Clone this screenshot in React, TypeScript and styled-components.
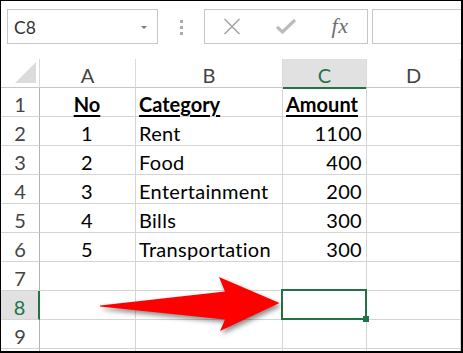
import React from 'react'
import styled, { createGlobalStyle, css } from 'styled-components'

const GlobalStyle = createGlobalStyle`
  html, body {
    margin: 0;
    padding: 0;
    background: #fff;
    overflow: hidden;
  }
`

const GREEN = '#217346'
const GRID_LINE = '#d4d4d4'
const FONT = `Lato, 'Liberation Sans', sans-serif`

const Frame = styled.div`
  position: relative;
  width: 463px;
  height: 353px;
  box-sizing: border-box;
  border: solid #000;
  border-width: 1px 2px 2px 1px;
  background: #fff;
  display: flex;
  flex-direction: column;
  overflow: hidden;
  font-family: ${FONT};
`

const Toolbar = styled.div`
  display: flex;
  align-items: flex-start;
  height: 58px;
  padding: 8px 0 0 6px;
  box-sizing: border-box;
`

const NameBox = styled.div`
  width: 151px;
  height: 35px;
  box-sizing: border-box;
  border: 1px solid #c6c6c6;
  display: flex;
  align-items: center;
  justify-content: space-between;
  padding: 1px 10px 0 6px;
  font-size: 17.5px;
  color: #333;
`

const DropArrow = styled.span`
  width: 0;
  height: 0;
  border-left: 3px solid transparent;
  border-right: 3px solid transparent;
  border-top: 3px solid #7a7a7a;
`

const Grip = styled.div`
  width: 46px;
  height: 35px;
  display: flex;
  flex-direction: column;
  align-items: center;
  justify-content: center;
  gap: 3px;
  padding: 1px 0 0 0;
  box-sizing: border-box;
`

const GripDot = styled.span`
  width: 3px;
  height: 3px;
  background: #ababab;
`

const FormulaButtons = styled.div`
  width: 164px;
  height: 35px;
  box-sizing: border-box;
  border: 1px solid #c6c6c6;
  display: flex;
`

const ButtonSlot = styled.div`
  width: 54px;
  display: flex;
  align-items: center;
  justify-content: center;
`

const FxLabel = styled.span`
  font-family: 'Liberation Serif', serif;
  font-style: italic;
  font-size: 22px;
  color: #6e6e6e;
  letter-spacing: 0.5px;
  margin-top: -2px;
`

const FormulaInput = styled.div`
  flex: 1;
  height: 35px;
  margin-left: 4px;
  box-sizing: border-box;
  border: 1px solid #c6c6c6;
  border-right: none;
`

const Sheet = styled.div`
  flex: 1;
  display: grid;
  grid-template-columns: 39px 96px 147px 84px 1fr;
  grid-auto-rows: 29px;
  overflow: hidden;
`

const headerText = css`
  font-size: 20px;
  color: #444;
  display: flex;
  align-items: center;
  justify-content: center;
  padding-top: 3px;
  box-sizing: border-box;
`

const Corner = styled.div`
  position: relative;
  border-right: 1px solid #dadada;
  border-bottom: 1px solid #c6c6c6;
  &::after {
    content: '';
    position: absolute;
    right: 3px;
    bottom: 4px;
    width: 0;
    height: 0;
    border-left: 21px solid transparent;
    border-bottom: 21px solid #dcdcdc;
  }
`

const ColHeader = styled.div<{ $active?: boolean }>`
  ${headerText}
  border-right: 1px solid #dadada;
  border-bottom: 1px solid #c6c6c6;
  ${p => p.$active && css`
    background: #e1e1e1;
    color: ${GREEN};
    border-bottom: 2px solid ${GREEN};
    margin-bottom: -1px;
    position: relative;
  `}
`

const RowHeader = styled.div<{ $active?: boolean }>`
  ${headerText}
  border-right: 1px solid #b4b4b4;
  border-bottom: 1px solid ${GRID_LINE};
  ${p => p.$active && css`
    background: #e1e1e1;
    color: ${GREEN};
    border-right: 2px solid ${GREEN};
  `}
`

const Cell = styled.div<{ $align?: 'left' | 'center' | 'right'; $bold?: boolean; $selected?: boolean }>`
  position: relative;
  border-right: 1px solid ${GRID_LINE};
  border-bottom: 1px solid ${GRID_LINE};
  box-sizing: border-box;
  display: flex;
  align-items: center;
  padding: 3px 4px 0 3px;
  font-size: 20px;
  letter-spacing: 0.3px;
  color: #000;
  white-space: nowrap;
  justify-content: ${p => p.$align === 'right' ? 'flex-end' : p.$align === 'center' ? 'center' : 'flex-start'};
  ${p => p.$bold && css`
    font-weight: 700;
    letter-spacing: 0;
    text-decoration: underline;
    text-decoration-thickness: 1.5px;
    text-underline-offset: 3px;
  `}
  ${p => p.$selected && css`
    &::after {
      content: '';
      position: absolute;
      top: -2px;
      left: -2px;
      right: -1px;
      bottom: -1px;
      border: 2px solid ${GREEN};
      z-index: 2;
    }
    &::before {
      content: '';
      position: absolute;
      right: -3px;
      bottom: -3px;
      width: 6px;
      height: 6px;
      background: ${GREEN};
      z-index: 3;
    }
  `}
`

const ArrowLayer = styled.svg`
  position: absolute;
  left: 89px;
  top: 269px;
  width: 200px;
  height: 70px;
  overflow: visible;
  filter: drop-shadow(2px 3px 2.5px rgba(0, 0, 0, 0.45));
  z-index: 5;
`

type Align = 'left' | 'center' | 'right'
type CellData = { text?: string; align?: Align; bold?: boolean }

const rows: CellData[][] = [
  [{ text: 'No', align: 'center', bold: true }, { text: 'Category', bold: true }, { text: 'Amount', bold: true }, {}],
  [{ text: '1', align: 'center' }, { text: 'Rent' }, { text: '1100', align: 'right' }, {}],
  [{ text: '2', align: 'center' }, { text: 'Food' }, { text: '400', align: 'right' }, {}],
  [{ text: '3', align: 'center' }, { text: 'Entertainment' }, { text: '200', align: 'right' }, {}],
  [{ text: '4', align: 'center' }, { text: 'Bills' }, { text: '300', align: 'right' }, {}],
  [{ text: '5', align: 'center' }, { text: 'Transportation' }, { text: '300', align: 'right' }, {}],
  [{}, {}, {}, {}],
  [{}, {}, {}, {}],
  [{}, {}, {}, {}],
]

const columns = ['A', 'B', 'C', 'D']
const activeCol = 2
const activeRow = 7

const CancelIcon = () =>
  <svg width='18' height='17' viewBox='0 0 18 17'>
    <path d='M1.5 1 L16.5 16 M16.5 1 L1.5 16' stroke='#a8a8a8' strokeWidth='1.6' fill='none' />
  </svg>

const EnterIcon = () =>
  <svg width='20' height='15' viewBox='0 0 20 15'>
    <path d='M1 8 L6.5 13 L19 1' stroke='#bcbcbc' strokeWidth='3.2' fill='none' />
  </svg>

export default function App() {
  return (
    <>
      <GlobalStyle />
      <Frame>
        <Toolbar>
          <NameBox>
            <span>C8</span>
            <DropArrow />
          </NameBox>
          <Grip>
            <GripDot />
            <GripDot />
            <GripDot />
          </Grip>
          <FormulaButtons>
            <ButtonSlot><CancelIcon /></ButtonSlot>
            <ButtonSlot><EnterIcon /></ButtonSlot>
            <ButtonSlot><FxLabel>fx</FxLabel></ButtonSlot>
          </FormulaButtons>
          <FormulaInput />
        </Toolbar>
        <Sheet>
          <Corner />
          {columns.map((c, i) =>
            <ColHeader key={c} $active={i === activeCol}>{c}</ColHeader>
          )}
          {rows.map((row, r) =>
            <React.Fragment key={r}>
              <RowHeader $active={r === activeRow}>{r + 1}</RowHeader>
              {row.map((cell, c) =>
                <Cell
                  key={c}
                  $align={cell.align}
                  $bold={cell.bold}
                  $selected={r === activeRow && c === activeCol}
                >
                  {cell.text}
                </Cell>
              )}
            </React.Fragment>
          )}
          {/* top sliver of the next row, cut off by the window */}
          <RowHeader />
          {columns.map(c => <Cell key={c} />)}
        </Sheet>
        <ArrowLayer viewBox='90 270 200 70'>
          <polygon
            points='100,305.5 225,291.5 219,277 279.5,303 220,331 225,319.5 100,306.5'
            fill='#ff0000'
          />
        </ArrowLayer>
      </Frame>
    </>
  )
}
